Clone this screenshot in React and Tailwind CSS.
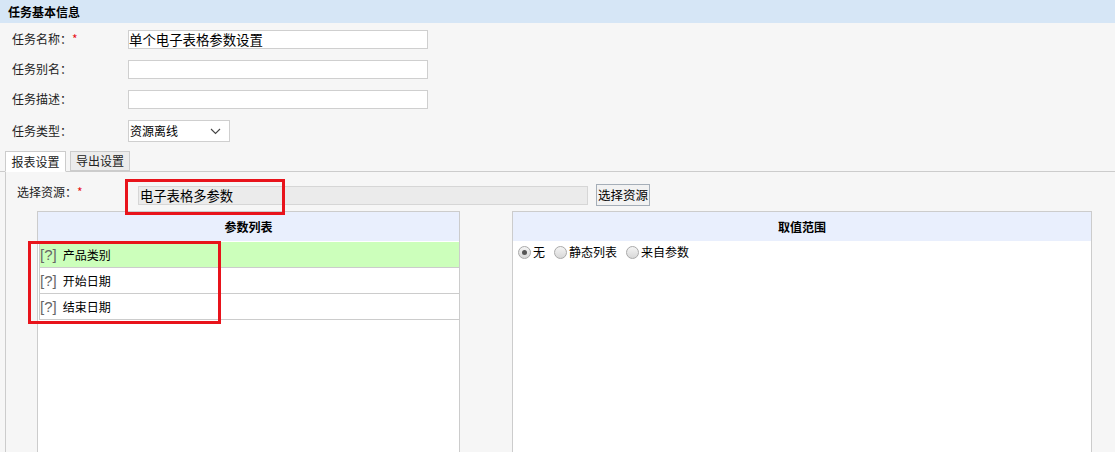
import React from "react";

const FormRow = ({ label, required, children, className = "" }) => (
  <div className={`flex items-center h-[30px] ${className}`}>
    <div className="w-[128px] pl-[12px] shrink-0">
      {label}
      {required && <span className="text-[#e8131b]">*</span>}
    </div>
    {children}
  </div>
);

const TextInput = ({ value = "" }) => (
  <div className="w-[300px] h-[19px] border border-[#cfcfcf] bg-white text-[13.4px] leading-[17px] text-black whitespace-nowrap overflow-hidden">
    {value}
  </div>
);

const Radio = ({ checked, label }) => (
  <label className="flex items-center gap-[2px] mr-[9px]">
    <span className="w-[13px] h-[13px] rounded-full border border-[#a9a9a9] bg-gradient-to-b from-[#f4f4f4] to-[#d8d8d8] flex items-center justify-center">
      {checked && <span className="w-[5px] h-[5px] rounded-full bg-[#555]" />}
    </span>
    <span>{label}</span>
  </label>
);

const params = ["产品类别", "开始日期", "结束日期"];

export default function App() {
  return (
    <div className="relative w-[1115px] h-[452px] overflow-hidden bg-[#f6f6f6] text-[12px] text-[#222] font-['Microsoft_YaHei','Noto_Sans_CJK_SC',sans-serif]">
      {/* 标题栏 */}
      <div className="h-[23px] bg-[#d6e6f6] pl-[8px] flex items-center font-bold text-black">
        任务基本信息
      </div>

      {/* 基本信息表单 */}
      <div className="pt-[1px]">
        <FormRow label="任务名称：" required>
          <TextInput value="单个电子表格参数设置" />
        </FormRow>
        <FormRow label="任务别名：">
          <TextInput />
        </FormRow>
        <FormRow label="任务描述：">
          <TextInput />
        </FormRow>
        <FormRow label="任务类型：" className="mt-[2px]">
          <div className="w-[102px] h-[22px] border border-[#cfcfcf] bg-white flex items-center justify-between pl-px pr-[8px] text-black">
            <span>资源离线</span>
            <svg width="11" height="7" viewBox="0 0 11 7" fill="none">
              <path d="M1 1l4.5 4.5L10 1" stroke="#444" strokeWidth="1.1" />
            </svg>
          </div>
        </FormRow>
      </div>

      {/* 标签页 */}
      <div className="mt-[5px] flex items-end gap-[4px] pl-[5px] h-[21px] border-b border-[#cccccc]">
        <div className="w-[61px] h-[21px] -mb-px bg-white border border-[#cccccc] border-b-white flex items-center justify-center">
          报表设置
        </div>
        <div className="w-[60px] h-[20px] bg-[#ececec] border border-[#cccccc] flex items-center justify-center">
          导出设置
        </div>
      </div>

      <div className="ml-[5px] border-l border-[#cccccc] h-[300px]">
        {/* 选择资源 */}
        <div className="flex items-center pt-[12px] h-[34px]">
          <div className="w-[132px] pl-[11px] shrink-0 self-start -mt-[1px]">
            选择资源：<span className="text-[#e8131b]">*</span>
          </div>
          <div className="w-[450px] h-[19px] border border-[#d6d6d6] bg-[#ebebeb] text-[13.3px] leading-[17px] pl-px text-black">
            电子表格多参数
          </div>
          <div className="ml-[8px] w-[54px] h-[22px] border border-[#a5aeb8] bg-[#f2f2f2] text-[12.5px] flex items-center justify-center whitespace-nowrap text-black">
            选择资源
          </div>
        </div>

        <div className="flex mt-[5px]">
          {/* 参数列表 */}
          <div className="ml-[31px] w-[423px] h-[260px] border border-[#cccccc] bg-white">
            <div className="h-[29px] bg-[#e9effd] flex items-center justify-center font-bold text-black">
              参数列表
            </div>
            <div className="mt-px ml-px">
              {params.map((p, i) => (
                <div
                  key={p}
                  className={`h-[26px] flex items-center border-l border-b border-[#cccccc] ${
                    i === 0 ? "bg-[#ccffbb]" : "bg-white"
                  }`}
                >
                  <span className="text-[15px] text-[#666] font-['Liberation_Sans',sans-serif] leading-none">[?]</span>
                  <span className="ml-[6px] text-black">{p}</span>
                </div>
              ))}
            </div>
          </div>

          {/* 取值范围 */}
          <div className="ml-[52px] w-[580px] h-[260px] border border-[#cccccc] bg-white">
            <div className="h-[29px] bg-[#e9effd] flex items-center justify-center font-bold text-black">
              取值范围
            </div>
            <div className="flex items-center pl-[5px] pt-[2px] text-black">
              <Radio checked label="无" />
              <Radio label="静态列表" />
              <Radio label="来自参数" />
            </div>
          </div>
        </div>
      </div>

      {/* 红框标注 */}
      <div className="absolute left-[125px] top-[179px] w-[160px] h-[36px] border-[3px] border-[#e8131b]" />
      <div className="absolute left-[28px] top-[241px] w-[193px] h-[83px] border-[3px] border-[#e8131b]" />
    </div>
  );
}
